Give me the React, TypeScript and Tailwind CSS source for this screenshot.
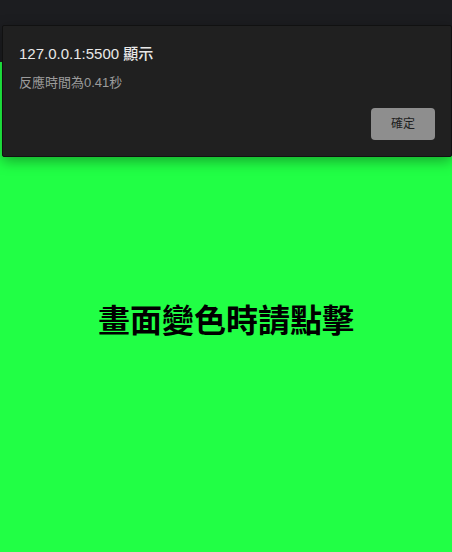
import React from "react";

export default function App() {
  const font = { fontFamily: '"Liberation Sans", "Noto Sans CJK TC", sans-serif' };
  return (
    <div className="relative w-[452px] h-[552px] flex flex-col bg-[#21ff45] overflow-hidden" style={font}>
      <div className="h-[62px] bg-[#1c1d20] shrink-0" />
      <div className="flex-1 flex items-center justify-center pt-[28px]">
        <h1 className="text-[32px] font-bold text-black leading-none tracking-[0px]">畫面變色時請點擊</h1>
      </div>
      <div className="absolute left-[2px] top-[25px] w-[450px] h-[132px] bg-[#202020] border border-[#111] rounded-[2px] shadow-[0_4px_14px_rgba(0,0,0,0.35)] flex flex-col pl-4 pr-4 pt-[18px] pb-4">
        <div className="text-[15px] leading-5 font-medium text-[#e8e8e8]">127.0.0.1:5500 顯示</div>
        <div className="mt-[10px] text-[13px] leading-[18px] text-[#9b9b9b]">反應時間為0.41秒</div>
        <div className="mt-auto flex justify-end">
          <button className="w-[64px] h-[32px] rounded-[4px] bg-[#8e8e8e] text-[12px] text-[#1e1e1e]">確定</button>
        </div>
      </div>
    </div>
  );
}
